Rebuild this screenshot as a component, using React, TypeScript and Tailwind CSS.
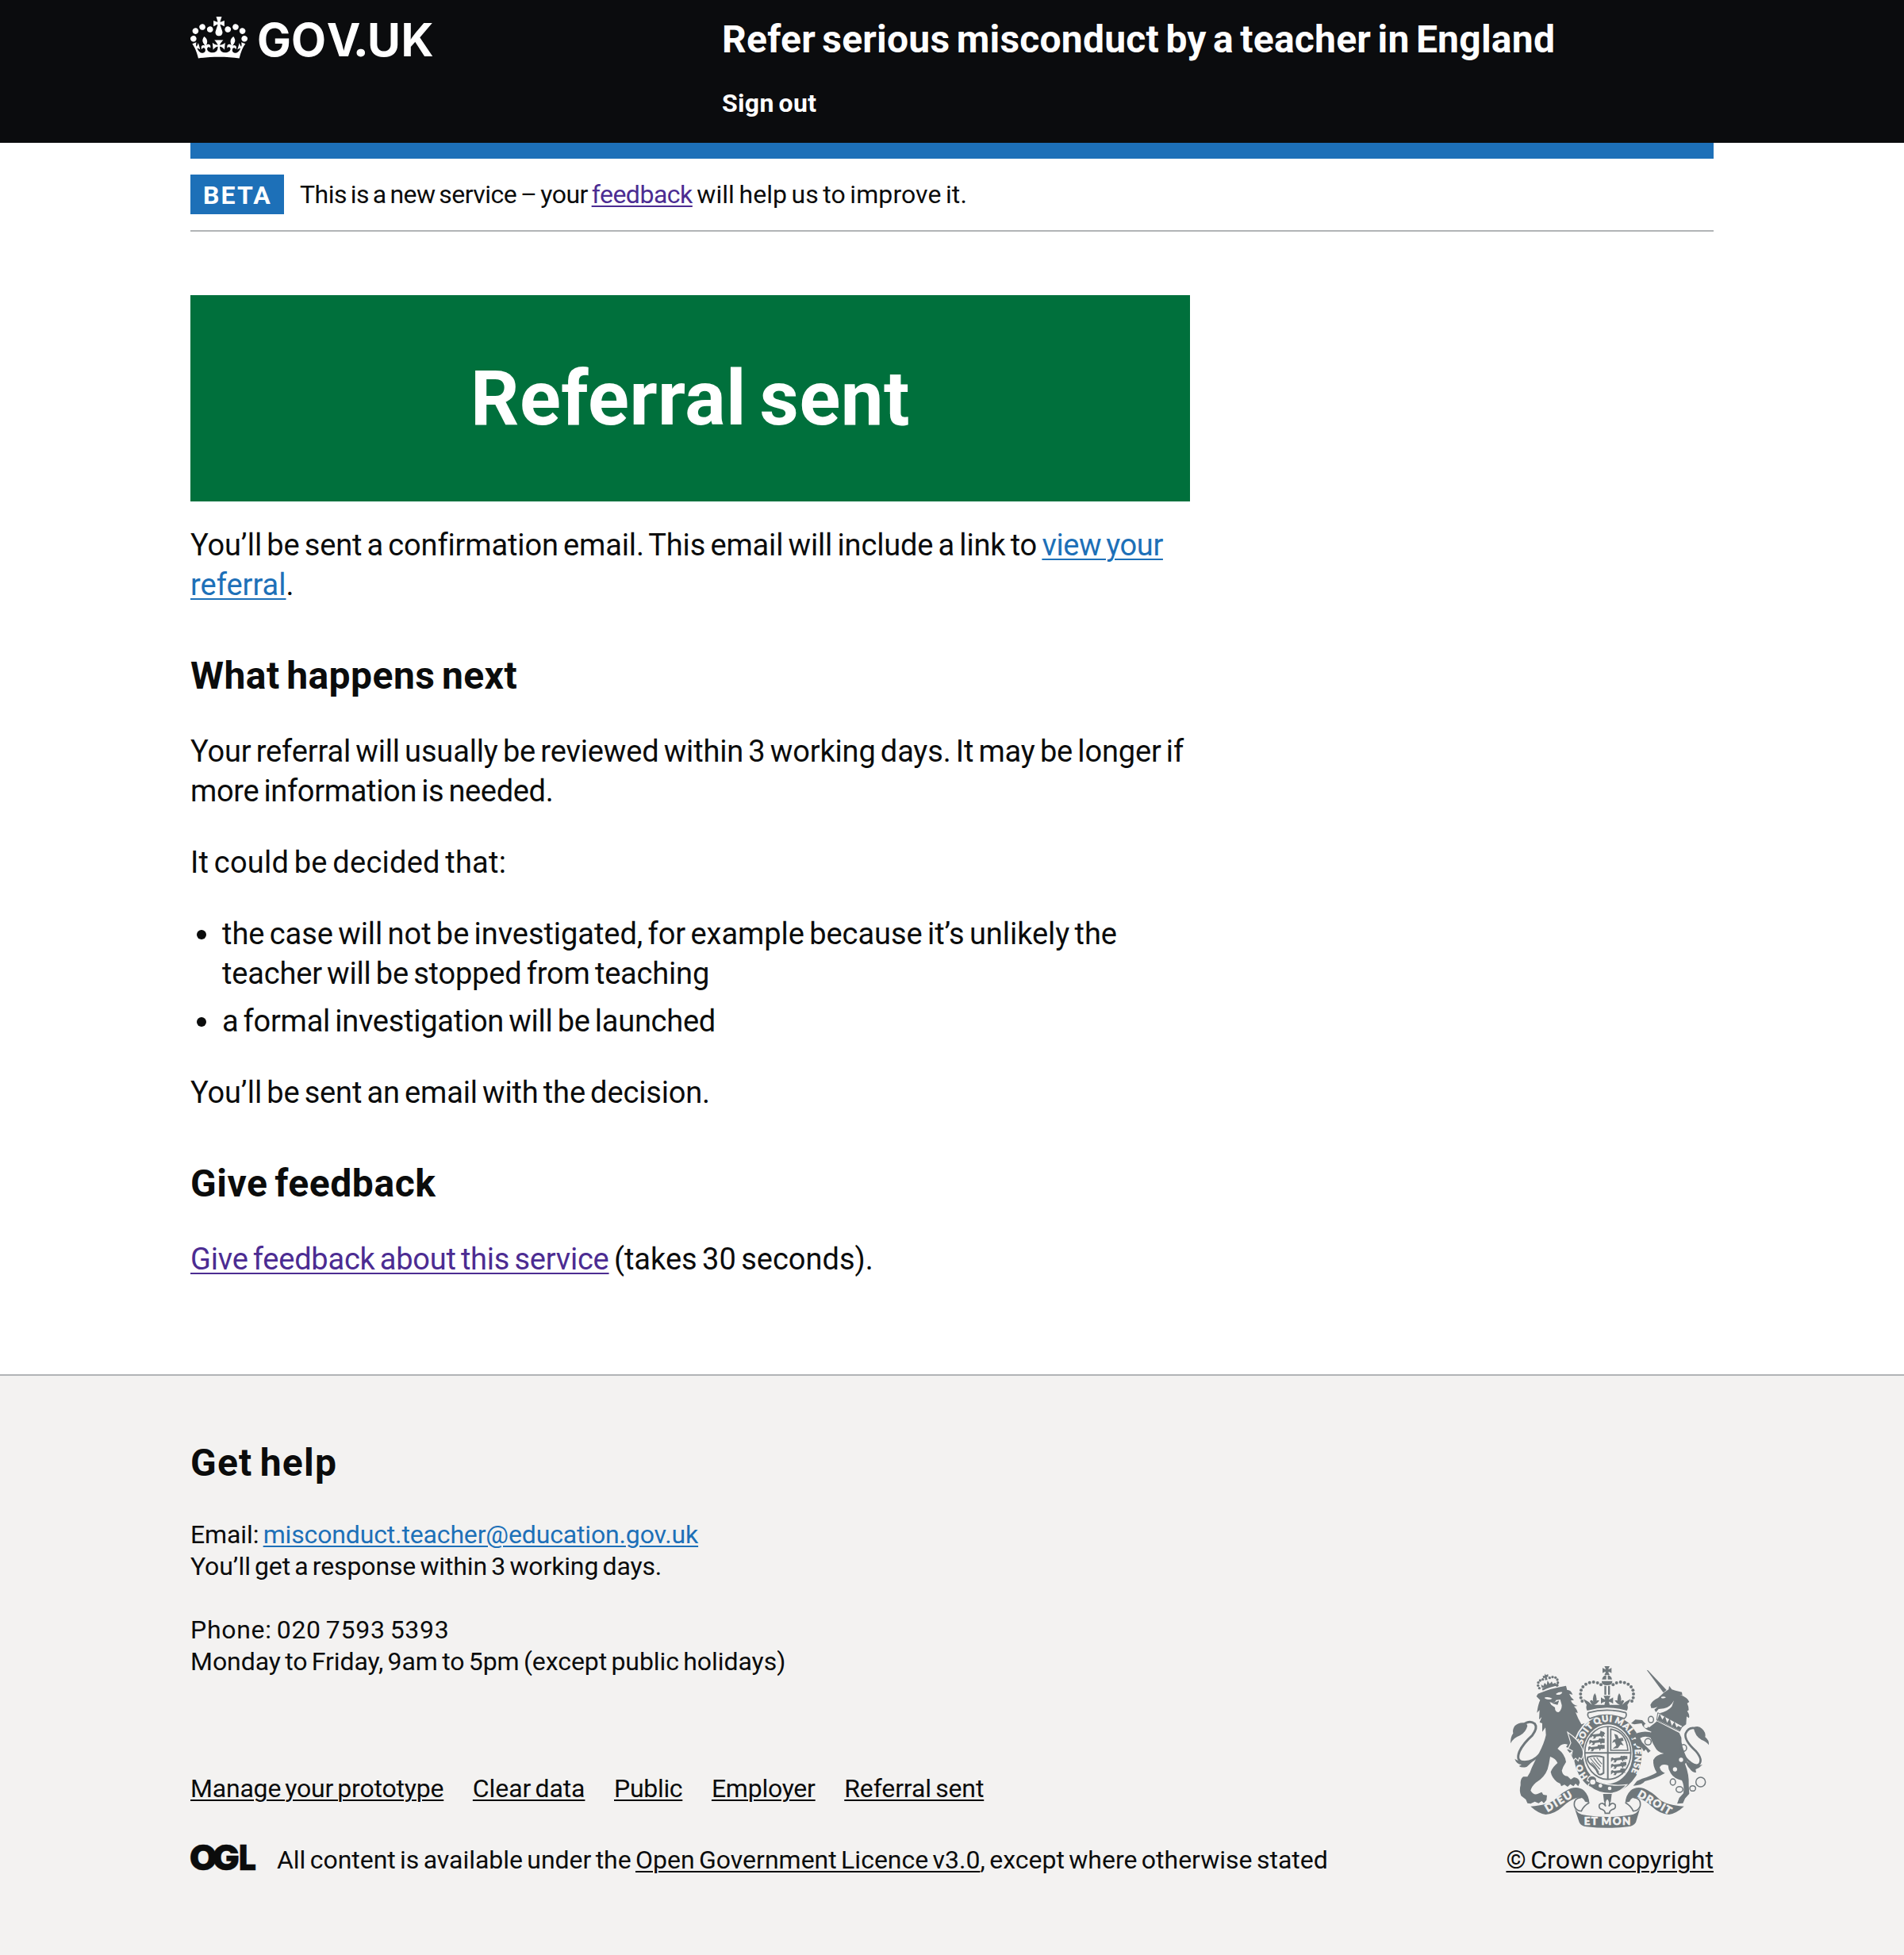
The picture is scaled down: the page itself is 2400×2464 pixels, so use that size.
import type { ReactNode } from "react";

function CrownLogo() {
  return (
    <svg viewBox="0 0 132 97" className="h-[53px] w-[72px]" fill="currentColor" aria-hidden="true">
      <path d="M25 30.2c3.5 1.5 7.7-.2 9.1-3.7 1.5-3.6-.2-7.8-3.9-9.2-3.6-1.4-7.6.3-9.1 3.9-1.4 3.5.3 7.5 3.9 9zM9 39.5c3.6 1.5 7.8-.2 9.2-3.7 1.5-3.6-.2-7.8-3.9-9.1-3.6-1.5-7.6.2-9.1 3.8-1.4 3.5.3 7.5 3.8 9zM4.4 57.2c3.5 1.5 7.7-.2 9.1-3.8 1.5-3.6-.2-7.7-3.9-9.1-3.5-1.5-7.6.3-9.1 3.8-1.4 3.5.3 7.6 3.9 9.1zm38.3-21.4c3.5 1.5 7.7-.2 9.1-3.8 1.5-3.6-.2-7.7-3.9-9.1-3.6-1.5-7.6.3-9.1 3.8-1.3 3.6.4 7.7 3.9 9.1zm64.4-5.6c-3.6 1.5-7.8-.2-9.1-3.7-1.5-3.6.2-7.8 3.8-9.2 3.6-1.4 7.7.3 9.2 3.9 1.3 3.5-.4 7.5-3.9 9zm15.9 9.3c-3.6 1.5-7.7-.2-9.1-3.7-1.5-3.6.2-7.8 3.7-9.1 3.6-1.5 7.7.2 9.2 3.8 1.5 3.5-.3 7.5-3.8 9zm4.7 17.7c-3.6 1.5-7.8-.2-9.2-3.8-1.5-3.6.2-7.7 3.9-9.1 3.6-1.5 7.7.3 9.2 3.8 1.3 3.5-.4 7.6-3.9 9.1zM89.3 35.8c-3.6 1.5-7.8-.2-9.2-3.8-1.4-3.6.2-7.7 3.9-9.1 3.6-1.5 7.7.3 9.2 3.8 1.4 3.6-.3 7.7-3.9 9.1zM69.7 17.7l8.9 4.7V9.3l-8.9 2.8c-.2-.3-.5-.6-.9-.9L72.4 0H59.6l3.5 11.2c-.3.3-.6.5-.9.9l-8.8-2.8v13.1l8.8-4.7c.3.3.6.7.9.9l-5 15.4v.1c-.2.8-.4 1.6-.4 2.4 0 4.1 3.1 7.5 7 8.1h.2c.3 0 .7.1 1 .1.4 0 .7 0 1-.1h.2c4-.6 7.1-4.1 7.1-8.1 0-.8-.1-1.7-.4-2.4V34l-5.1-15.4c.4-.2.7-.6 1-.9zM66 92.8c16.9 0 32.8 1.1 47.1 3.2 4-16.9 8.9-26.7 14-33.5l-9.6-3.4c1 4.9 1.1 7.2 0 10.2-1.5-1.4-3-4.3-4.2-8.7L108.6 76c2.8-2 5-3.2 7.5-3.3-4.4 9.4-10 11.9-13.6 11.2-4.3-.8-6.3-4.6-5.6-7.9 1-4.7 5.7-5.9 8-.5 4.3-8.7-3-11.4-7.6-8.8 7.1-7.2 7.9-13.5 2.1-21.1-8 6.1-8.1 12.3-4.5 20.8-4.7-5.4-12.1-2.5-9.5 6.2 3.4-5.2 7.9-2 7.2 3.1-.6 4.3-6.4 7.8-13.5 7.2-10.3-.9-10.9-8-11.2-13.8 2.5-.5 7.1 1.8 11 7.3L80.2 60c-4.1 4.4-8 5.3-12.3 5.4 1.4-4.4 8-11.6 8-11.6H55.5s6.4 7.2 7.9 11.6c-4.2-.1-8-1-12.3-5.4l1.4 16.4c3.9-5.5 8.5-7.7 10.9-7.3-.3 5.8-.9 12.8-11.1 13.8-7.2.6-12.9-2.9-13.5-7.2-.7-5 3.8-8.3 7.1-3.1 2.7-8.7-4.6-11.6-9.4-6.2 3.7-8.5 3.6-14.7-4.6-20.8-5.8 7.6-5 13.9 2.2 21.1-4.7-2.6-11.9.1-7.7 8.8 2.3-5.5 7.1-4.2 8.1.5.7 3.3-1.3 7.1-5.7 7.9-3.5.7-9-1.8-13.5-11.2 2.5.1 4.7 1.3 7.5 3.3l-4.7-15.4c-1.2 4.4-2.7 7.2-4.3 8.7-1.1-3-.9-5.3 0-10.2l-9.5 3.4c5 6.9 9.9 16.7 14 33.5 14.8-2.1 30.8-3.2 47.7-3.2z" />
    </svg>
  );
}

function GovukWordmark() {
  return (
    <svg viewBox="0 0 222 80" className="ml-[13px] h-[80px] w-[222px] overflow-visible" fill="currentColor">
      <text x="-1 42 86.8 120.5 138 180.6" y="52" className="font-[Inter] text-[57.2px] font-bold">
        GOV<tspan className="font-[Roboto] text-[66px] font-bold">.</tspan>UK
      </text>
    </svg>
  );
}

function OglLogo() {
  return (
    <svg viewBox="0 0 82 34" className="h-[34px] w-[82px] overflow-visible" fill="currentColor">
      <g className="font-[Inter] text-[44px] font-black" stroke="currentColor" strokeWidth="0.4">
        <text x="-1.2" y="33" textLength="35" lengthAdjust="spacingAndGlyphs">O</text>
        <text x="27.5" y="33" textLength="34.5" lengthAdjust="spacingAndGlyphs">G</text>
        <text x="61" y="33" textLength="22" lengthAdjust="spacingAndGlyphs">L</text>
      </g>
    </svg>
  );
}

const archPearls: [number, number][] = [
  [343, 192], [338, 179], [337, 165], [339, 151], [346, 138], [357, 128], [371, 122], [386, 120], [401, 123], [414, 130],
];
const lionPearls: [number, number][] = [
  [121, 113], [116, 103], [117, 92], [124, 84], [134, 80], [160, 74], [171, 71], [182, 73], [189, 81], [191, 92], [188, 103],
];
const chainRings: [number, number, number, number][] = [
  [183, 232, 10, 12], [172, 316, 12, 12], [306, 339, 12, 13], [266, 468, 10, 12], [291, 496, 13, 11], [341, 492, 11, 10], [371, 468, 18, 18],
];
const chainSpots: [number, number][] = [[165, 256], [297, 384], [274, 420]];

function PassantLion({ x, y }: { x: number; y: number }) {
  return (
    <path
      transform={`translate(${x} ${y})`}
      d="M0 6 Q6 0 10 6 L30 4 Q36 4 38 -4 Q42 0 50 -4 L56 2 L50 8 L56 14 L48 12 L44 20 L40 12 L22 14 L18 22 L8 22 L14 16 L8 12 L0 20Z"
    />
  );
}

function RoyalCrest() {
  return (
    <svg viewBox="72 60 750 612" className="h-[204px] w-[250px] overflow-visible text-[#6f777b]" fill="currentColor">
      {/* imperial crown */}
      <path d="M427 60 H447 Q442 68 442 72 Q448 71 454 66 V86 Q448 81 442 81 Q442 86 447 93 H427 Q432 86 432 81 Q426 81 420 86 V66 Q426 71 432 72 Q432 68 427 60Z" />
      <path d="M418 110 Q422 95 434 94 V110Z M440 94 Q452 95 456 110 H440Z" />
      <path d="M417 116 H457 Q458 132 437 132 Q416 132 417 116Z" />
      <path d="M427 134 H434 V168 H427Z M441 134 H448 V168 H441Z" />
      {archPearls.map(([x, y]) => (
        <g key={`${x}-${y}`}>
          <circle cx={x} cy={y} r="6" />
          <circle cx={874 - x} cy={y} r="6" />
        </g>
      ))}
      <path d="M424 172 H450 Q445 182 444 186 Q452 184 460 178 V202 Q452 194 444 194 L447 206 H486 Q476 204 466 190 Q478 186 477 194 Q474 174 483 162 Q494 176 489 194 Q494 184 502 192 L494 206 Q506 194 526 184 Q522 198 514 206 Q518 220 512 228 Q437 206 362 228 Q356 220 360 206 Q352 198 348 184 Q368 194 380 206 L372 192 Q380 184 385 194 Q380 176 391 162 Q400 174 397 194 Q396 186 408 190 Q398 204 388 206 H427 L430 194 Q422 194 414 202 V178 Q422 184 430 186 Q429 182 424 172Z" />

      {/* lion */}
      <g transform="translate(60 30)">
        {lionPearls.map(([x, y]) => (
          <circle key={`${x}-${y}`} cx={x} cy={y} r="5" />
        ))}
        <path d="M142 58 l4 6 l8 -4 l1 10 l-6 1 l3 10 l-9 2 l-1 -9 l-7 1 l-1 -9 l7 1z" />
        <path d="M131 115 Q160 98 192 96 L194 103 Q160 108 134 122Z" />
        <path d="M130 112 l-2 -13 l8 6 l5 -12 l8 8 l3 -17 l8 13 l8 -9 l4 9 l10 -5 l2 12z" />
        <path d="M116 134 Q168 112 222 104 L226 120 Q240 118 247 138 L234 134 Q240 150 252 158 L240 160 Q248 178 266 180 L252 182 Q266 195 266 208 L258 204 Q268 230 280 250 L292 246 L285 275 L290 300 L262 312 Q278 335 284 360 Q285 384 270 388 L256 380 L258 368 L246 378 L240 366 L246 350 L236 358 L226 346 L236 340 L222 336 L228 326 Q205 318 190 342 Q218 362 222 392 Q210 410 206 425 Q210 446 228 446 L240 458 L252 450 Q272 452 274 470 L268 484 L258 474 L250 484 L238 476 L228 486 L216 478 L204 484 L200 474 L188 468 Q168 452 164 430 Q172 410 190 396 Q184 380 162 372 Q158 400 152 420 Q140 452 108 470 Q92 484 88 500 Q100 520 116 512 L130 506 L136 516 L150 518 L148 536 L138 548 L130 540 L118 548 L104 542 L88 550 L76 548 L70 534 L52 520 Q44 500 50 480 Q48 456 60 448 L76 448 Q88 430 92 415 Q104 388 118 362 Q140 320 146 290 L144 262 L132 278 L132 246 L122 242 L130 222 L120 232 L122 196 L112 206 Q116 175 124 158 L110 144Z" />
        <path d="M142 148 Q156 144 170 152 Q160 160 142 152Z M184 134 Q196 126 208 128 Q204 140 186 138Z M160 166 Q180 172 184 158 L200 156 L206 178 Q206 196 194 204 Q180 204 180 186 L166 176Z" fill="#f3f2f1" />
        <path d="M168 170 L196 160 L190 176 Z" />
        <path d="M124 362 Q100 390 66 392 Q30 392 46 352 Q60 322 94 292 Q116 262 104 248 Q84 232 60 252" fill="none" stroke="currentColor" strokeWidth="9" />
        <path d="M72 246 Q48 238 28 256 Q18 272 22 284 Q12 296 12 322 Q24 300 48 292 Q70 280 76 256Z" />
        <path d="M28 380 Q46 396 104 384 Q88 396 74 410 Q56 416 44 408 L54 402 Q34 400 28 380Z" />
      </g>

      {/* garter and shield */}
      <ellipse cx="440" cy="392" rx="112" ry="131" fill="#f3f2f1" stroke="#f3f2f1" strokeWidth="44" />
      <ellipse cx="440" cy="392" rx="111" ry="130" fill="#f3f2f1" stroke="currentColor" strokeWidth="35" />
      <path d="M366 236 Q437 216 508 236 Q514 250 502 258 Q437 232 372 258 Q360 250 366 236Z" fill="#f3f2f1" stroke="currentColor" strokeWidth="5" />
      <ellipse cx="440" cy="388" rx="87" ry="100" fill="none" stroke="currentColor" strokeWidth="5" />
      <path d="M437 288 H443 V488 H437Z M353 385 H527 V391 H353Z" />
      <g>
        <PassantLion x={374} y={312} />
        <PassantLion x={370} y={336} />
        <PassantLion x={366} y={360} />
        <PassantLion x={452} y={402} />
        <PassantLion x={452} y={426} />
        <PassantLion x={452} y={450} />
        <path d="M412 304 l14 6 v10 l-14 6z M416 334 h12 v16 h-12z M414 358 h14 v14 h-14z M500 400 h14 v12 h-14z M498 422 h12 v14 h-12z M488 446 h12 v12 h-12z" />
      </g>
      <path d="M451 298 Q510 306 516 378 H451Z" fill="none" stroke="currentColor" strokeWidth="5" />
      <path d="M464 316 L476 320 L482 334 L496 330 L500 342 L490 344 L500 360 L488 356 L478 370 L458 372 L472 360 L466 346 L456 350 L462 338 L470 336Z" />
      <path d="M364 404 Q394 396 424 404 V464 Q408 476 402 464 Q398 448 372 428 Q360 416 364 404Z" fill="none" stroke="currentColor" strokeWidth="6" />
      <path d="M374 408 Q388 426 410 450 M386 406 Q398 424 414 440 M398 405 Q406 418 418 430 M378 424 Q392 436 406 462" fill="none" stroke="currentColor" strokeWidth="3.5" />
      <path id="garter-right" d="M343 365 C351 311 389 270 440 270 C500 270 543 330 543 392 C543 440 525 478 497 500" fill="none" />
      <path id="garter-left" d="M372 486 C352 466 340 440 338 408" fill="none" />
      <g fill="#f3f2f1" stroke="#f3f2f1" strokeWidth="1.6" className="font-[Lato] text-[33px] font-black">
        <text>
          <textPath href="#garter-right" startOffset="8" textLength="388">SOIT QUI MAL Y PENSE</textPath>
        </text>
        <text>
          <textPath href="#garter-left" startOffset="10" textLength="56">HO</textPath>
        </text>
      </g>
      <path d="M366 482 Q374 470 388 476 Q402 484 396 494 Q446 516 512 508 Q486 538 452 541 Q400 540 376 518 Q360 514 370 504 Q376 496 362 492Z" stroke="#f3f2f1" strokeWidth="4" />
      <circle cx="383" cy="498" r="12" fill="#f3f2f1" stroke="currentColor" strokeWidth="4" />
      <circle cx="412" cy="512" r="7" fill="#f3f2f1" />
      <circle cx="447" cy="522" r="7" fill="#f3f2f1" />
      {/* fore paw resting on the garter */}
      <path d="M288 310 Q330 338 344 372 Q352 396 340 412 L332 406 L328 418 L318 408 L310 416 L302 400 L306 380 L290 372 L300 350Z" stroke="#f3f2f1" strokeWidth="3.5" />

      {/* unicorn */}
      <g transform="translate(420 30)">
        <path d="M167 44 L172 46 L242 120 L230 130Z" />
        <path d="M181 176 Q188 160 210 150 L234 128 L250 118 L252 104 L262 118 L276 122 L300 128 L302 140 L292 138 Q322 148 328 165 L320 170 Q326 182 326 196 L320 200 Q332 215 326 226 L318 220 L316 250 L300 262 L216 208 Q250 198 262 182 L270 160 Q256 186 232 190 L212 192 L202 204 L196 194 L208 184 L194 188 L184 188Z" />
        <path d="M222 146 Q232 142 240 148 Q230 154 222 150Z" fill="#f3f2f1" />
        <path d="M209 206 L302 256 L292 276 L205 234Z" fill="#f3f2f1" stroke="currentColor" strokeWidth="3" />
        <path d="M207 233 L292 274 L298 262 L286 256 L280 262 L272 240 L262 256 L254 228 L244 244 L236 218 L226 232 L216 210Z" />
        <path d="M205 238 L290 282 L298 300 Q296 330 322 385 L312 400 Q328 440 326 480 L328 512 L312 530 L304 548 L282 550 L290 528 L306 510 Q310 480 300 462 Q270 455 258 435 Q248 420 248 405 Q225 396 216 412 Q220 430 236 434 Q200 455 160 465 Q150 480 116 482 L130 464 L150 455 Q185 445 205 432 Q190 410 192 385 Q200 365 232 360 Q208 356 198 335 Q184 312 180 294 Q188 260 205 238Z" />
        <path d="M204 240 Q196 262 186 278 L172 272 Q152 262 148 246 L120 250 L108 246 L124 232 L150 234 L176 262Z" />
        <path d="M194 284 L190 304 Q162 290 142 302 L150 318 L182 350 L172 358 L164 344 L156 352 L148 338 L128 330 Q122 318 130 312 L124 298 L112 306 L112 292 L134 282 Q164 272 194 284Z" />
        {chainRings.map(([x, y, rx, ry]) => (
          <ellipse key={`${x}-${y}`} cx={x} cy={y} rx={rx} ry={ry} fill="none" stroke="currentColor" strokeWidth="4.5" />
        ))}
        {chainSpots.map(([x, y]) => (
          <circle key={`${x}-${y}`} cx={x} cy={y} r="8" fill="#f3f2f1" />
        ))}
        <path d="M312 375 Q345 412 364 402 Q382 385 352 350 Q308 310 314 285 Q326 256 356 266" fill="none" stroke="currentColor" strokeWidth="8" />
        <path d="M344 262 Q362 252 376 266 Q392 280 388 298 Q404 310 402 328 Q392 314 374 308 Q350 296 344 262Z" />
        <path d="M312 384 Q344 412 378 402 Q366 416 352 420 L354 432 Q338 432 330 418 Q316 404 312 384Z" />
      </g>

      {/* motto ribbon */}
      <path d="M148 590 Q214 586 240 564 Q270 534 300 522 Q330 514 350 530 Q368 548 370 576 L354 572 Q346 552 322 558 Q296 566 270 590 Q240 618 205 621 Q176 616 148 590Z" />
      <path d="M728 590 Q662 586 636 564 Q606 534 576 522 Q546 514 526 530 Q508 548 506 576 L522 572 Q530 552 554 558 Q580 566 606 590 Q636 618 671 621 Q700 616 728 590Z" />
      <path d="M340 556 Q308 560 314 590 Q322 608 340 608 Q348 588 370 576 M536 556 Q568 560 562 590 Q554 608 536 608 Q528 588 506 576" fill="none" stroke="currentColor" strokeWidth="5" />
      <path d="M312 590 Q322 622 360 624 Q438 636 516 624 Q554 622 564 590 L546 650 Q538 664 516 667 Q438 676 360 667 Q338 664 332 650Z" />
      <path d="M422 543 H455 L451 574 H426Z" />
      <path d="M438 558 Q452 574 444 590 Q456 570 468 584 Q472 600 456 602 Q446 606 446 616 H430 Q430 606 420 602 Q404 600 408 584 Q420 570 432 590 Q424 574 438 558Z" fill="#f3f2f1" stroke="currentColor" strokeWidth="5" />
      <g fill="#f3f2f1" stroke="#f3f2f1" strokeWidth="1.8" className="font-[Lato] text-[40px] font-black">
        <text transform="translate(212 612) rotate(-31)" textLength="112">DIEU</text>
        <text x="350" y="661" textLength="176">ET MON</text>
        <text transform="translate(550 552) rotate(30)" textLength="140">DROIT</text>
      </g>
    </svg>
  );
}

const underlined = "underline decoration-2";

function FooterLink({ className, children }: { className: string; children: ReactNode }) {
  return (
    <a href="#" className={`${underlined} underline-offset-[3px] ${className}`}>
      {children}
    </a>
  );
}

export default function App() {
  return (
    <div className="min-h-[2464px] w-[2400px] bg-white font-[Roboto,sans-serif] whitespace-pre text-[#0b0c0c] [&_*]:[word-spacing:-0.08em]">
      <header className="h-[180px] bg-[#0b0c0e] text-white">
        <div className="mx-auto flex w-[1920px]">
          <a href="#" className="flex h-[95px] w-[670px] items-start pt-[21px]">
            <CrownLogo />
            <div className="-mt-[2px]">
              <GovukWordmark />
            </div>
          </a>
          <div className="flex flex-col pt-5">
            <a href="#" className="text-[48px] leading-[60px] font-bold tracking-[0.23px]">
              Refer serious misconduct by a teacher in England
            </a>
            <a href="#" className="mt-[30px] text-[32px] leading-[40px] font-bold tracking-[0.35px]">
              Sign out
            </a>
          </div>
        </div>
      </header>

      <div className="mx-auto w-[1920px]">
        <div className="h-5 bg-[#1d70b8]" />
        <div className="flex h-[92px] items-start border-b-2 border-[#b1b4b6] pt-5">
          <strong className="h-[50px] w-[118px] bg-[#1d70b8] pl-4 text-[32px] leading-[52px] font-bold tracking-[2.1px] text-white">
            BETA
          </strong>
          <p className="pt-[5px] pl-5 text-[32px] leading-[40px]">
            <span className="tracking-[-0.54px]">This is a new service – your </span>
            <a href="#" className={`${underlined} tracking-[-0.49px] text-[#4c2c92] underline-offset-[3px]`}>feedback</a>
            <span className="tracking-[0.08px]"> will help us to improve it.</span>
          </p>
        </div>

        <main className="w-[1260px] pt-20 pb-[120px] text-[38px] leading-[50px]">
          <div className="bg-[#00703c] py-20 text-center text-white">
            <h1 className="text-[96px] leading-[100px] font-bold tracking-[0.5px]">Referral sent</h1>
          </div>
          <p className="mt-[30px]">
            <span className="tracking-[-0.146px]">You’ll be sent a confirmation email. This email will include a link to </span>
            <a href="#" className={`${underlined} text-[#1d70b8] underline-offset-4`}>
              <span className="tracking-[-0.38px]">view your</span>
              <br />
              referral
            </a>
            .
          </p>

          <h2 className="mt-[60px] text-[48px] leading-[60px] font-bold tracking-[0.45px]">What happens next</h2>
          <p className="mt-10">
            <span className="tracking-[-0.155px]">Your referral will usually be reviewed within 3 working days. It may be longer if</span>
            <br />
            <span className="tracking-[-0.33px]">more information is needed.</span>
          </p>
          <p className="mt-10 tracking-[0.23px]">It could be decided that:</p>
          <ul className="mt-10 flex flex-col gap-[10px]">
            <li className="flex">
              <span className="mt-5 mr-5 ml-2 size-3 shrink-0 rounded-full bg-[#0b0c0c]" />
              <span>
                <span className="tracking-[-0.05px]">the case will not be investigated, for example because it’s unlikely the</span>
                <br />
                <span className="tracking-[-0.18px]">teacher will be stopped from teaching</span>
              </span>
            </li>
            <li className="flex">
              <span className="mt-5 mr-5 ml-2 size-3 shrink-0 rounded-full bg-[#0b0c0c]" />
              <span className="tracking-[-0.25px]">a formal investigation will be launched</span>
            </li>
          </ul>
          <p className="mt-10 tracking-[-0.155px]">You’ll be sent an email with the decision.</p>

          <h2 className="mt-[60px] text-[48px] leading-[60px] font-bold tracking-[0.55px]">Give feedback</h2>
          <p className="mt-10">
            <a href="#" className={`${underlined} tracking-[-0.22px] text-[#4c2c92] underline-offset-4`}>Give feedback about this service</a>
            {" (takes 30 seconds)."}
          </p>
        </main>
      </div>

      <footer className="h-[732px] border-t-2 border-[#b1b4b6] bg-[#f3f2f1] pt-20">
        <div className="mx-auto flex w-[1920px] items-end justify-between text-[32px] leading-[40px]">
          <div>
            <h2 className="text-[48px] leading-[60px] font-bold tracking-[1.2px]">Get help</h2>
            <p className="mt-10">
              <span className="tracking-[-0.1px]">Email: </span>
              <a href="#" className={`${underlined} tracking-[-0.15px] text-[#1d70b8] underline-offset-[3px]`}>misconduct.teacher@education.gov.uk</a>
              <br />
              <span className="tracking-[-0.13px]">You’ll get a response within 3 working days.</span>
            </p>
            <p className="mt-10">
              <span className="tracking-[0.7px]">Phone: 020 7593 5393</span>
              <br />
              <span className="tracking-[-0.06px]">Monday to Friday, 9am to 5pm (except public holidays)</span>
            </p>
            <nav className="mt-[120px] flex gap-[36.6px]">
              <FooterLink className="tracking-[-0.2px]">Manage your prototype</FooterLink>
              <FooterLink className="tracking-[-0.1px]">Clear data</FooterLink>
              <FooterLink className="tracking-[-0.3px]">Public</FooterLink>
              <FooterLink className="tracking-[-0.25px]">Employer</FooterLink>
              <FooterLink className="tracking-[-0.13px]">Referral sent</FooterLink>
            </nav>
            <div className="mt-[50px] flex h-10 items-start">
              <OglLogo />
              <p className="ml-[27px]">
                <span className="tracking-[-0.03px]">All content is available under the </span>
                <FooterLink className="tracking-normal">Open Government Licence v3.0</FooterLink>
                , except where otherwise stated
              </p>
            </div>
          </div>
          <div className="flex flex-col items-center gap-5">
            <RoyalCrest />
            <FooterLink className="tracking-[0.1px]">© Crown copyright</FooterLink>
          </div>
        </div>
      </footer>
    </div>
  );
}
